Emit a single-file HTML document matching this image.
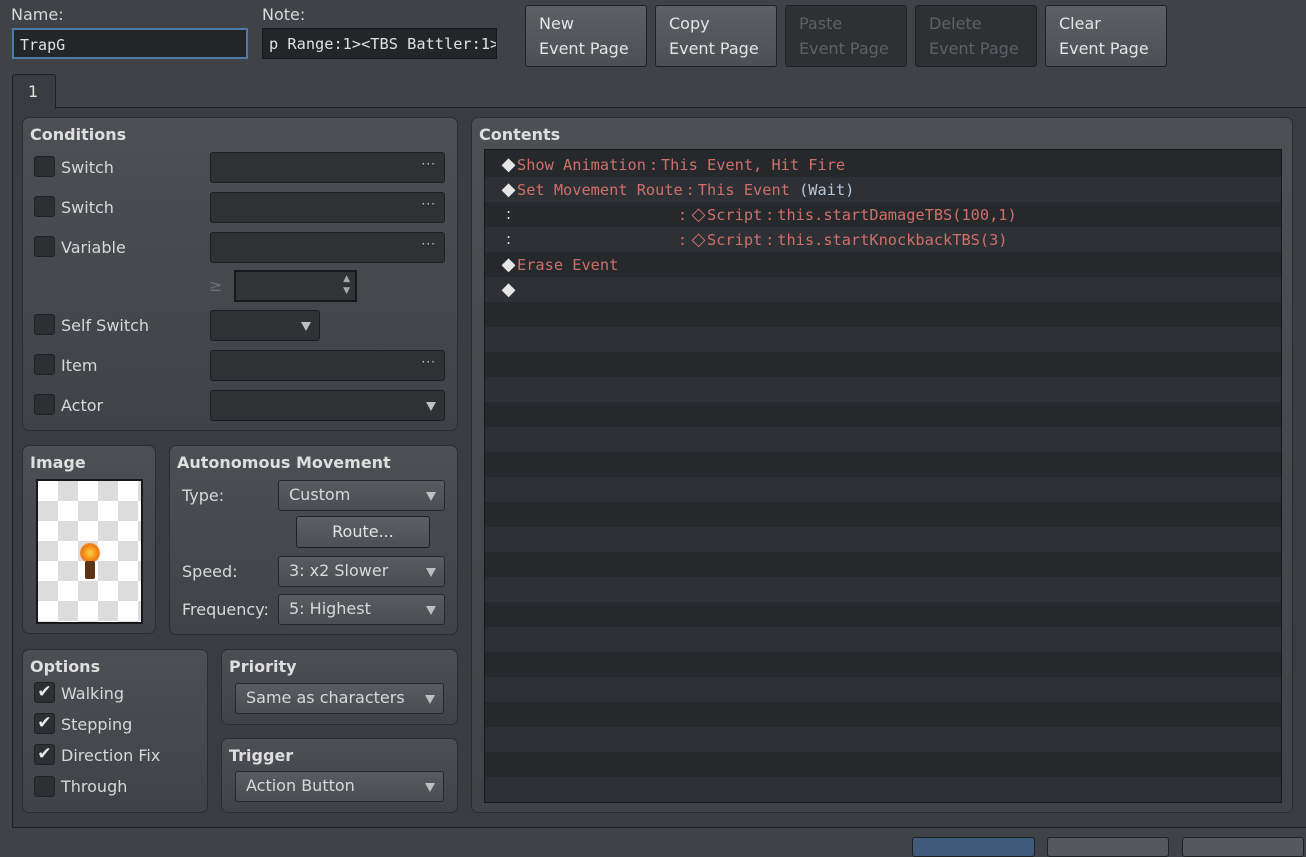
<!DOCTYPE html>
<html><head><style>
*{box-sizing:border-box;margin:0;padding:0}
body{width:1306px;height:843px;overflow:hidden;background:#3f4246;font-family:"DejaVu Sans","Liberation Sans",sans-serif;font-size:16px;color:#d6d6d6;position:relative}
.a{position:absolute}
.lbl{position:absolute;font-size:16px;color:#d8d8d8}
.inp{position:absolute;background:#232629;border:1px solid #15171a;font-family:"DejaVu Sans Mono","Liberation Mono",monospace;font-size:15px;color:#e0e0e0;padding:6px 6px;white-space:nowrap;overflow:hidden}
.btn{position:absolute;top:5px;width:122px;height:62px;border:1px solid #1e2023;border-radius:3px;background:linear-gradient(#5c6064,#4c4f53);color:#e4e4e4;font-size:16px;line-height:25px;padding:5px 0 0 13px}
.btn.d{background:#2e3134;color:#5d6064}
.box{position:absolute;border:1px solid #2a2c2f;border-radius:7px;background:linear-gradient(#4c4f53,#3f4246)}
.ttl{position:absolute;left:7px;top:7px;font-weight:bold;font-size:16px;color:#dedede}
.cb{position:absolute;width:21px;height:21px;background:#2d3033;border:1px solid #1f2124;border-radius:3px}
.fld{position:absolute;background:#2f3235;border:1px solid #1c1e21;border-radius:3px;height:31px}
.dots{position:absolute;right:8px;top:4px;color:#c8c8c8;font-size:12px;letter-spacing:1px}
.dd{position:absolute;background:linear-gradient(#585c60,#4a4d51);border:1px solid #25272a;border-radius:3px;height:31px;color:#d8d8d8;padding:4px 0 0 10px;font-size:16px}
.tri{position:absolute;right:8px;top:11px;width:0;height:0;border-left:5px solid transparent;border-right:5px solid transparent;border-top:9px solid #bfbfbf}
.row{position:absolute;left:0;width:796px;height:25px;font-family:"DejaVu Sans Mono","Noto Sans CJK JP",monospace;font-size:15.3px;color:#cf6f6a;line-height:25px;white-space:pre}
.w{color:#e6e6e6;font-size:18px;display:inline-block;width:17px;text-align:center;font-family:"DejaVu Sans",sans-serif}
.o{font-size:18px;display:inline-block;width:17px;text-align:center;font-family:"DejaVu Sans",sans-serif}
.c{display:inline-block;width:15px;text-align:center}
.b{color:#b8c8d8}
</style></head><body>
<div class="lbl" style="left:11px;top:5px">Name:</div>
<div class="inp" style="left:12px;top:28px;width:236px;height:31px;border:2px solid #4d7aa6">TrapG</div>
<div class="lbl" style="left:262px;top:5px">Note:</div>
<div class="inp" style="left:262px;top:28px;width:235px;height:31px;font-size:15.3px">p Range:1&gt;&lt;TBS Battler:1&gt;</div>
<div class="btn" style="left:525px">New<br>Event Page</div>
<div class="btn" style="left:655px">Copy<br>Event Page</div>
<div class="btn d" style="left:785px">Paste<br>Event Page</div>
<div class="btn d" style="left:915px">Delete<br>Event Page</div>
<div class="btn" style="left:1045px">Clear<br>Event Page</div>

<div class="a" style="left:12px;top:107px;width:1300px;height:721px;background:#393c40;border:1px solid #1e2023"></div>
<div class="a" style="left:12px;top:74px;width:44px;height:35px;background:#393c40;border:1px solid #1e2023;border-bottom:none;border-radius:3px 3px 0 0;padding:7px 0 0 15px;color:#e0e0e0">1</div>

<div class="box" style="left:22px;top:117px;width:436px;height:314px">
<div class="ttl">Conditions</div>
<div class="cb" style="left:11px;top:38px"></div><div class="lbl" style="left:38px;top:40px">Switch</div>
<div class="fld" style="left:187px;top:34px;width:235px"><span class="dots">···</span></div>
<div class="cb" style="left:11px;top:78px"></div><div class="lbl" style="left:38px;top:80px">Switch</div>
<div class="fld" style="left:187px;top:74px;width:235px"><span class="dots">···</span></div>
<div class="cb" style="left:11px;top:118px"></div><div class="lbl" style="left:38px;top:120px">Variable</div>
<div class="fld" style="left:187px;top:114px;width:235px"><span class="dots">···</span></div>
<div class="lbl" style="left:186px;top:158px;color:#6d7074">≥</div>
<div class="a" style="left:211px;top:152px;width:123px;height:32px;background:#313437;border:2px solid #17191b"><span style="position:absolute;right:5px;top:1px;font-size:9px;color:#aaa;line-height:12px">▲<br>▼</span></div>
<div class="cb" style="left:11px;top:196px"></div><div class="lbl" style="left:38px;top:198px">Self Switch</div>
<div class="fld" style="left:187px;top:192px;width:110px"><span class="tri"></span></div>
<div class="cb" style="left:11px;top:236px"></div><div class="lbl" style="left:38px;top:238px">Item</div>
<div class="fld" style="left:187px;top:232px;width:235px"><span class="dots">···</span></div>
<div class="cb" style="left:11px;top:276px"></div><div class="lbl" style="left:38px;top:278px">Actor</div>
<div class="fld" style="left:187px;top:272px;width:235px"><span class="tri"></span></div>
</div>

<div class="box" style="left:22px;top:445px;width:134px;height:189px">
<div class="ttl">Image</div>
<div class="a" style="left:13px;top:33px;width:107px;height:145px;border:2px solid #16181a;background-color:#fff;background-image:linear-gradient(45deg,#dcdcdc 25%,transparent 25%,transparent 75%,#dcdcdc 75%),linear-gradient(45deg,#dcdcdc 25%,transparent 25%,transparent 75%,#dcdcdc 75%);background-size:40px 40px;background-position:0 0,20px 20px">
<div class="a" style="left:42px;top:62px;width:20px;height:20px;border-radius:50%;background:radial-gradient(#ffd040,#f07a10 60%,rgba(240,160,40,0))"></div>
<div class="a" style="left:47px;top:80px;width:10px;height:18px;background:#5a3414;border-radius:2px"></div>
</div></div>

<div class="box" style="left:169px;top:445px;width:289px;height:190px">
<div class="ttl">Autonomous Movement</div>
<div class="lbl" style="left:12px;top:40px">Type:</div>
<div class="dd" style="left:108px;top:34px;width:167px">Custom<span class="tri"></span></div>
<div class="a" style="left:126px;top:70px;width:134px;height:32px;border:1px solid #1e2023;border-radius:3px;background:linear-gradient(#5c6064,#4c4f53);text-align:center;padding-top:5px;color:#e2e2e2">Route...</div>
<div class="lbl" style="left:12px;top:116px">Speed:</div>
<div class="dd" style="left:108px;top:110px;width:167px">3: x2 Slower<span class="tri"></span></div>
<div class="lbl" style="left:12px;top:154px">Frequency:</div>
<div class="dd" style="left:108px;top:148px;width:167px">5: Highest<span class="tri"></span></div>
</div>

<div class="box" style="left:22px;top:649px;width:186px;height:164px">
<div class="ttl">Options</div>
<div class="cb" style="left:11px;top:32px;color:#e8e8e8;font-size:17px;line-height:19px;text-align:center">✔</div><div class="lbl" style="left:38px;top:34px">Walking</div>
<div class="cb" style="left:11px;top:63px;color:#e8e8e8;font-size:17px;line-height:19px;text-align:center">✔</div><div class="lbl" style="left:38px;top:65px">Stepping</div>
<div class="cb" style="left:11px;top:94px;color:#e8e8e8;font-size:17px;line-height:19px;text-align:center">✔</div><div class="lbl" style="left:38px;top:96px">Direction Fix</div>
<div class="cb" style="left:11px;top:126px"></div><div class="lbl" style="left:38px;top:127px">Through</div>
</div>

<div class="box" style="left:221px;top:649px;width:237px;height:76px">
<div class="ttl">Priority</div>
<div class="dd" style="left:13px;top:33px;width:209px">Same as characters<span class="tri"></span></div>
</div>
<div class="box" style="left:221px;top:738px;width:237px;height:75px">
<div class="ttl">Trigger</div>
<div class="dd" style="left:13px;top:32px;width:209px">Action Button<span class="tri"></span></div>
</div>

<div class="box" style="left:471px;top:117px;width:822px;height:696px">
<div class="ttl">Contents</div>
<div class="a" style="left:12px;top:31px;width:798px;height:654px;border:1px solid #15171a;background:repeating-linear-gradient(#26292c 0 25px,#2d3034 25px 50px);background-position:0 2px;overflow:hidden">
<div class="row" style="top:2px;left:15px"><span class="w">◆</span>Show Animation<span class="c">:</span>This Event, Hit Fire</div>
<div class="row" style="top:27px;left:15px"><span class="w">◆</span>Set Movement Route<span class="c">:</span>This Event <span class="b">(Wait)</span></div>
<div class="row" style="top:52px;left:15px"><span class="w" style="font-size:15px">:</span></div>
<div class="row" style="top:52px;left:190px"><span class="c">:</span><span class="o">◇</span>Script<span class="c">:</span>this.startDamageTBS(100,1)</div>
<div class="row" style="top:77px;left:15px"><span class="w" style="font-size:15px">:</span></div>
<div class="row" style="top:77px;left:190px"><span class="c">:</span><span class="o">◇</span>Script<span class="c">:</span>this.startKnockbackTBS(3)</div>
<div class="row" style="top:102px;left:15px"><span class="w">◆</span>Erase Event</div>
<div class="row" style="top:127px;left:15px"><span class="w">◆</span></div>
</div></div>

<div class="a" style="left:912px;top:837px;width:123px;height:20px;border:1px solid #1e2023;border-radius:3px;background:#3f5a7a"></div>
<div class="a" style="left:1047px;top:837px;width:122px;height:20px;border:1px solid #1e2023;border-radius:3px;background:#55595d"></div>
<div class="a" style="left:1182px;top:837px;width:122px;height:20px;border:1px solid #1e2023;border-radius:3px;background:#55595d"></div>
</body></html>
